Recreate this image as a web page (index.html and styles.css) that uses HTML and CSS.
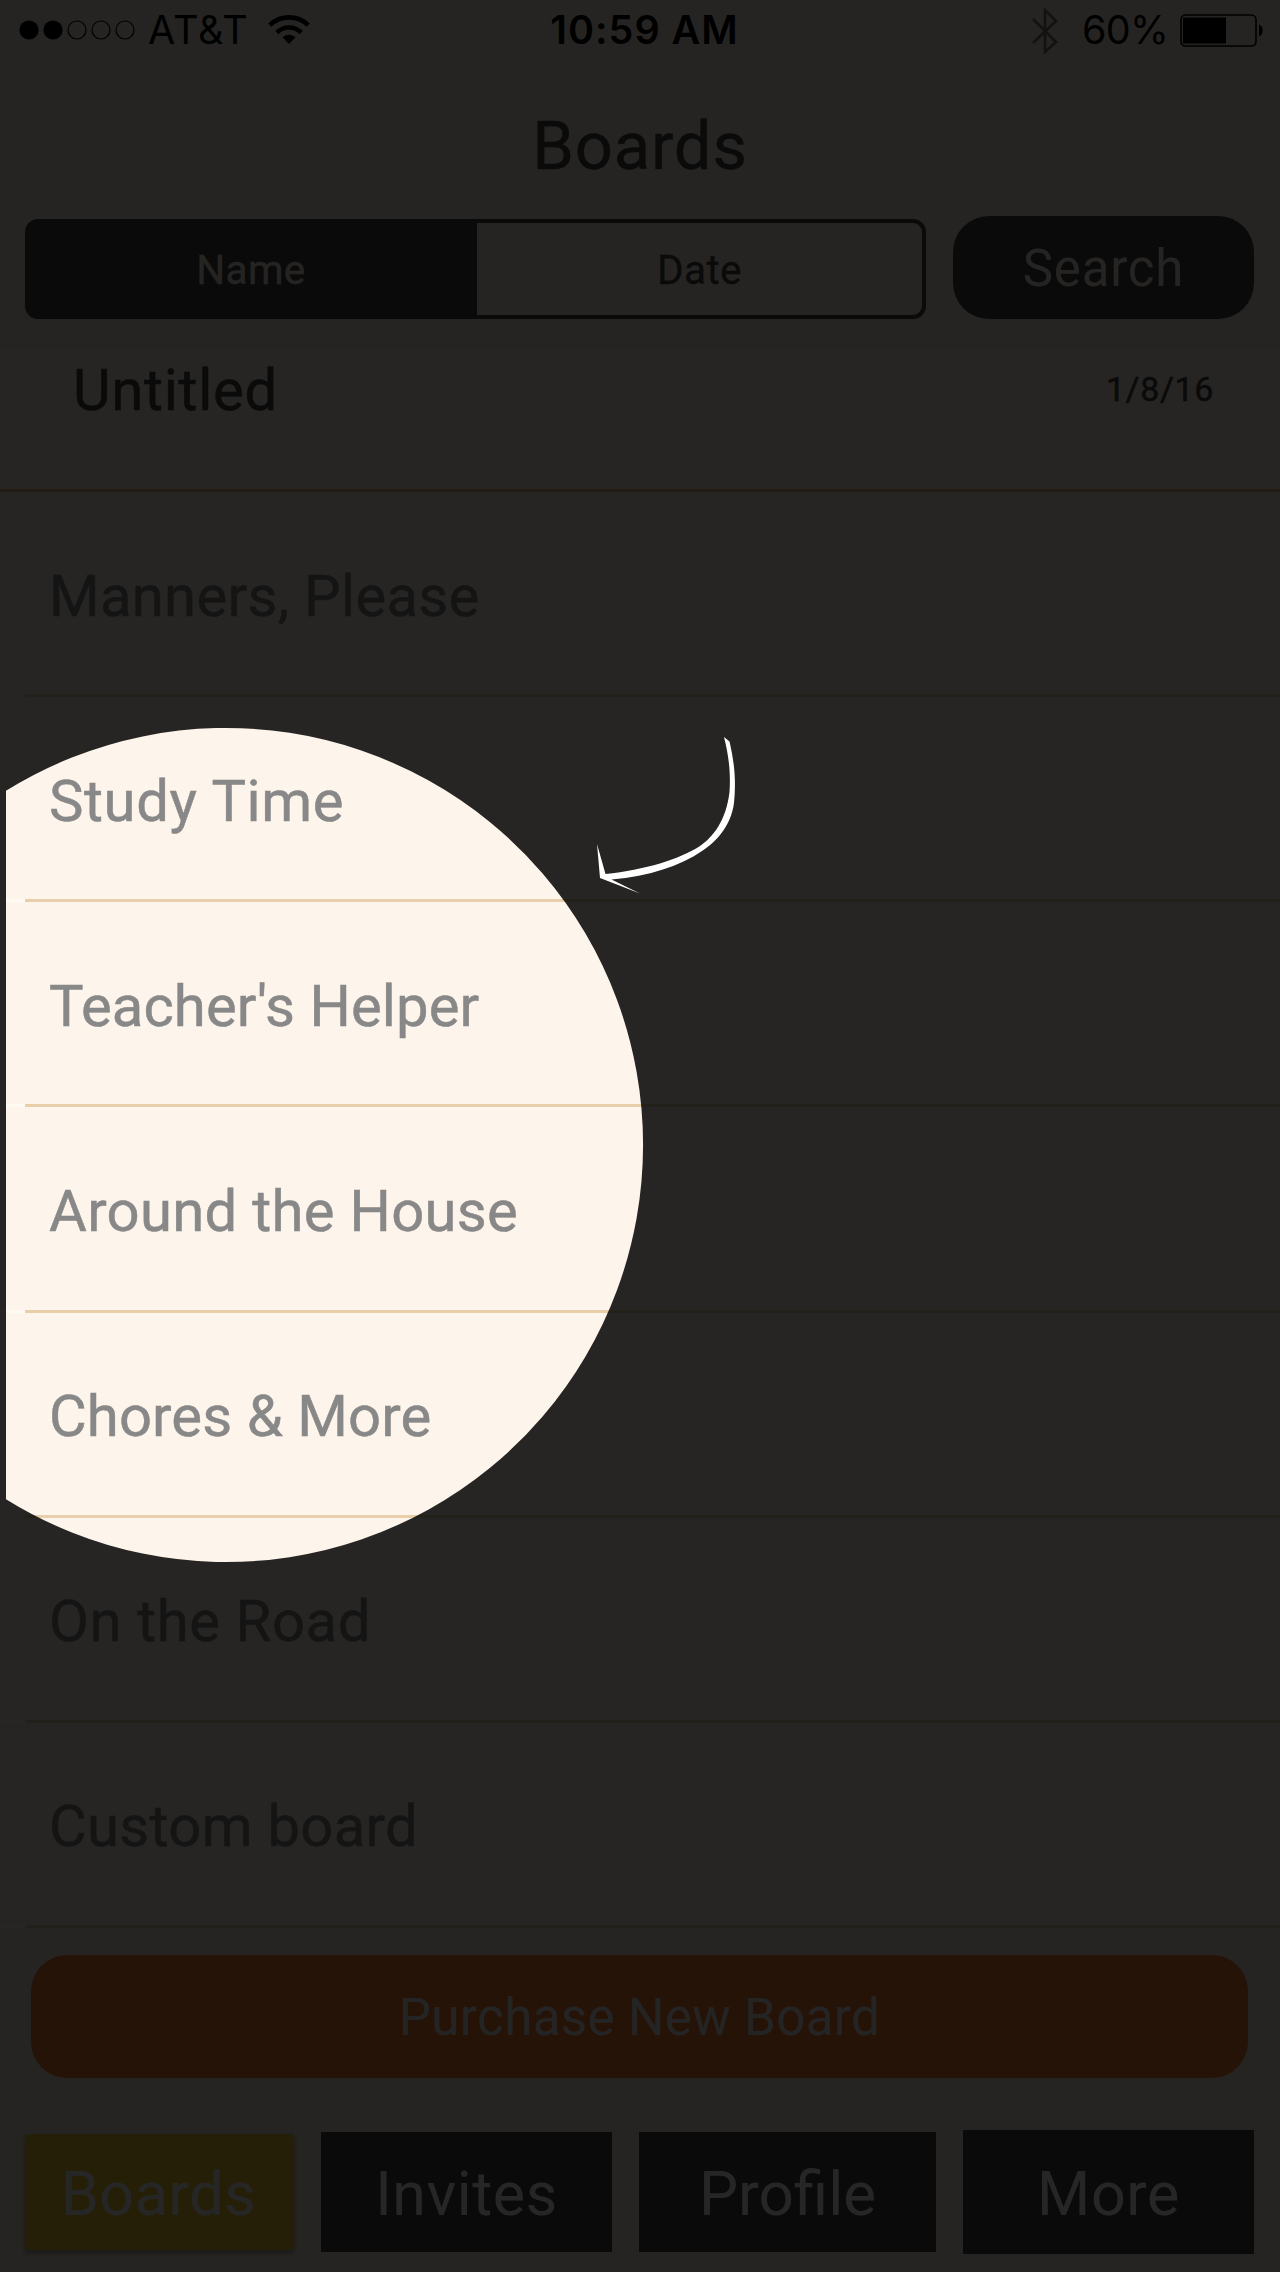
FILE: index.html
```html
<!DOCTYPE html>
<html lang="en">
<head>
<meta charset="utf-8">
<title>Boards</title>
<link rel="stylesheet" href="styles.css">
</head>
<body>
<div class="screen">
  <header class="header">
    <div class="status">
      <div class="status-left">
        <svg class="signal" width="118" height="20" viewBox="0 0 118 20"><circle cx="10" cy="10" r="9.6"/><circle cx="34" cy="10" r="9.6"/><g fill="none" stroke="#000" stroke-width="1.2"><circle cx="58" cy="10" r="9"/><circle cx="82" cy="10" r="9"/><circle cx="106" cy="10" r="9"/></g></svg>
        <span class="carrier">AT&amp;T</span>
        <svg class="wifi" width="42" height="31" viewBox="0 0 42 31"><path d="M21 30l-6.5-6.7a9.5 9.5 0 0 1 13 0z"/><g fill="none" stroke="#000" stroke-width="4.6"><path d="M8.800 18.500a17.500 17.500 0 0 1 24.400 0"/><path d="M1.800 11.200a27.500 27.500 0 0 1 38.400 0"/></g></svg>
      </div>
      <span class="clock">10:59 AM</span>
      <div class="status-right">
        <svg class="bluetooth" width="26" height="46" viewBox="0 0 26 46"><path d="M1 11l23 23-11 10V2l11 11L1 35" fill="none" stroke="#000" stroke-width="2.600"/></svg>
        <span class="percent">60%</span>
        <svg class="battery" width="85" height="33" viewBox="0 0 85 33"><rect x="1" y="1" width="75" height="31" rx="4.500" fill="none" stroke="#000" stroke-width="1.600"/><rect x="3" y="3.500" width="43" height="26"/><path d="M79 10.500c5 1.500 5 10.500 0 12z"/></svg>
      </div>
    </div>
    <h1 class="title">Boards</h1>
    <div class="controls">
      <div class="segments">
        <span class="segment segment-on">Name</span>
        <span class="segment">Date</span>
      </div>
      <span class="search">Search</span>
    </div>
  </header>
  <main class="list">
    <div class="row row-owned"><span>Untitled</span><span class="date">1/8/16</span></div>
    <div class="row"><span>Manners, Please</span></div>
    <div class="row row-loose"><span>Study Time</span></div>
    <div class="row row-tight"><span>Teacher's Helper</span></div>
    <div class="row"><span>Around the House</span></div>
    <div class="row row-tight"><span>Chores &amp; More</span></div>
    <div class="row row-loose"><span>On the Road</span></div>
    <div class="row"><span>Custom board</span></div>
  </main>
  <footer class="footer">
    <span class="purchase">Purchase New Board</span>
    <nav class="tabs">
      <span class="tab tab-boards">Boards</span>
      <span class="tab tab-invites">Invites</span>
      <span class="tab tab-profile">Profile</span>
      <span class="tab tab-more">More</span>
    </nav>
  </footer>
  <svg class="spotlight" width="1280" height="2272" viewBox="0 0 1280 2272">
    <path fill="#000" fill-opacity=".85" fill-rule="evenodd" d="M0 0H1280V2272H0ZM6 790.800A417 417 0 1 1 6 1499.200Z"/>
    <path fill="#fff" d="M724 737L729.500 741.500C735 765 736 783 734 803C731 826 716 842 702 851C680 866 650 876 611.500 879.500L640 893.500L600 878L597 844L605.500 874C645 870 680 859 700 846C713 837 726 821 729.500 792C731 770 728 753 724 737Z"/>
  </svg>
</div>
</body>
</html>
```

FILE: styles.css
```css
* { box-sizing: border-box; }
body { margin: 0; font-family: Roboto, "Liberation Sans", sans-serif; }
.screen { position: relative; width: 1280px; height: 2272px; display: flex; flex-direction: column; background: #f6f0e4; overflow: hidden; color: #434343; }
.header { height: 349px; }
.status { height: 60px; display: grid; grid-template-columns: 1fr auto 1fr; padding: 0 15px 0 19px; font-family: Inter, "Liberation Sans", sans-serif; font-size: 39.500px; line-height: 61px; color: #000; white-space: nowrap; }
.status-left, .status-right { display: flex; }
.status-right { justify-content: flex-end; }
.signal { margin-top: 20px; }
.carrier { margin-left: 11px; width: 100px; font-weight: 400; letter-spacing: 1px; }
.wifi { margin: 14px 0 0 20px; }
.clock { font-weight: 600; letter-spacing: 1px; margin-left: 5px; }
.bluetooth { margin: 8px 24px 0 0; opacity: .5; }
.percent { letter-spacing: -.7px; }
.battery { margin: 14px 0 0 12px; }
.title { margin: 0; height: 159px; padding-top: 43px; line-height: 86px; text-align: center; font-weight: 400; font-size: 67px; letter-spacing: .8px; -webkit-text-stroke: .4px; }
.controls { display: flex; align-items: flex-end; justify-content: space-between; height: 100px; padding: 0 26px 0 25px; }
.segments { display: flex; width: 901px; height: 100px; border: 4px solid #434343; border-radius: 13px; }
.segment { flex: 1; line-height: 95px; text-align: center; font-size: 40.500px; letter-spacing: .4px; -webkit-text-stroke: .3px; }
.segment-on { flex: 0 0 448px; padding-right: 4px; background: #434343; color: #f8f0e4; }
.search { width: 301px; height: 103px; border-radius: 36px; background: #434343; color: #f8f0e4; text-align: center; line-height: 106px; font-size: 51px; letter-spacing: .8px; }
.list { background: #fdf5eb; }
.row { position: relative; height: 205.140px; padding: 2px 66px 0 49px; display: flex; align-items: center; justify-content: space-between; font-size: 58px; letter-spacing: .3px; color: #888; -webkit-text-stroke: .5px; }
.row::after { content: ""; position: absolute; left: 0; right: 0; bottom: 0; height: 3px; background: linear-gradient(to right, #fefaf3 25px, #e8cfaa 25px); }
.row-loose { letter-spacing: .6px; }
.row-tight { letter-spacing: .1px; }
.row-owned { height: 143px; padding: 0 66px 61px 73px; color: #434343; letter-spacing: .7px; }
.row-owned::after { background: #e3b88f; }
.date { font-size: 34px; letter-spacing: .6px; position: relative; top: -1px; }
.footer { flex: 1; padding: 27px 26px 0 25px; }
.purchase { display: block; margin: 0 6px; height: 123px; border-radius: 36px; background: #f77f30; color: #f4f0f0; text-align: center; line-height: 126px; font-size: 51px; letter-spacing: .4px; }
.tabs { display: flex; align-items: center; justify-content: space-between; margin-top: 52px; height: 124px; font-size: 61px; color: #fff; text-align: center; }
.tab { background: #434343; line-height: 128px; letter-spacing: .6px; }
.tab-boards { width: 269px; height: 116px; line-height: 120px; padding-right: 2px; background: #fdcf30; box-shadow: 0 3px 5px rgba(0, 0, 0, .3); }
.tab-invites { width: 291px; height: 120px; line-height: 124px; }
.tab-profile { width: 297px; height: 120px; line-height: 124px; letter-spacing: 0; font-size: 62px; }
.tab-more { width: 291px; height: 124px; }
.spotlight { position: absolute; left: 0; top: 0; }
```
